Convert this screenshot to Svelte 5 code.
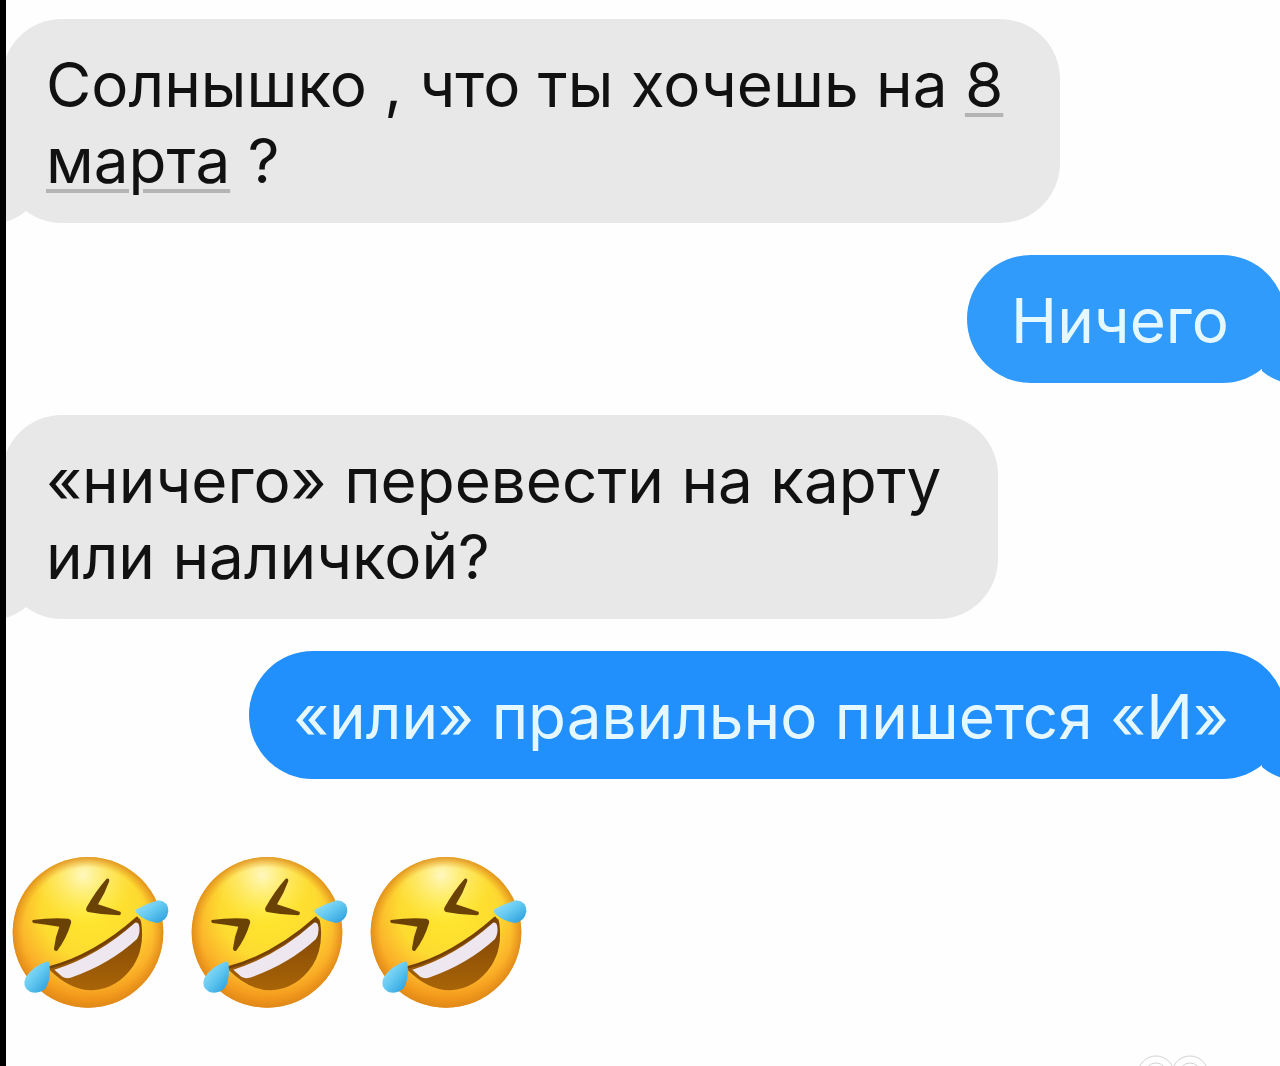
<script lang="ts">
  type Part = { text: string; marked?: boolean };
  type Message = { side: 'in' | 'out'; tone: string; lines: Part[][] };

  const messages: Message[] = [
    {
      side: 'in',
      tone: 'grey',
      lines: [
        [{ text: 'Солнышко , что ты хочешь на ' }, { text: '8', marked: true }],
        [{ text: 'марта', marked: true }, { text: ' ?' }],
      ],
    },
    { side: 'out', tone: 'sky', lines: [[{ text: 'Ничего' }]] },
    {
      side: 'in',
      tone: 'grey',
      lines: [[{ text: '«ничего» перевести на карту' }], [{ text: 'или наличкой?' }]],
    },
    { side: 'out', tone: 'blue', lines: [[{ text: '«или» правильно пишется «И»' }]] },
  ];
</script>

<main class="chat">
  {#each messages as message}
    <div class="bubble {message.side} {message.tone}">
      {#each message.lines as line}
        <span class="line">{#each line as part}<span class:marked={part.marked}>{part.text}</span>{/each}</span>
      {/each}
      <svg class="tail" viewBox="0 0 24 44" aria-hidden="true">
        <path d="M0 0H24V32Q15 40 0 44Z" fill="currentColor" />
      </svg>
    </div>
  {/each}

  <div class="reactions">
    {#each [1, 2, 3] as n}
      <svg class="emoji" viewBox="36 42 474 474" role="img" aria-label="🤣">
        <defs>
          <radialGradient id="face{n}" gradientUnits="userSpaceOnUse" cx="270" cy="210" r="292">
            <stop offset="0" stop-color="#ffe82c" />
            <stop offset="0.5" stop-color="#fddb31" />
            <stop offset="0.76" stop-color="#fbb32a" />
            <stop offset="1" stop-color="#ee8612" />
          </radialGradient>
          <radialGradient id="shine{n}" gradientUnits="userSpaceOnUse" cx="250" cy="105" r="150">
            <stop offset="0" stop-color="#fffbd0" stop-opacity="0.9" />
            <stop offset="1" stop-color="#fff27a" stop-opacity="0" />
          </radialGradient>
          <radialGradient id="rim{n}" gradientUnits="userSpaceOnUse" cx="264" cy="277" r="226">
            <stop offset="0.86" stop-color="#e79a1c" stop-opacity="0" />
            <stop offset="1" stop-color="#dd8a1b" stop-opacity="0.85" />
          </radialGradient>
          <linearGradient id="mouth{n}" x1="0" y1="0" x2="0" y2="1">
            <stop offset="0" stop-color="#7a4304" />
            <stop offset="1" stop-color="#a96407" />
          </linearGradient>
          <linearGradient id="tear{n}" x1="0" y1="0" x2="1" y2="1">
            <stop offset="0" stop-color="#a5e6f8" />
            <stop offset="0.5" stop-color="#62c8f0" />
            <stop offset="1" stop-color="#2398da" />
          </linearGradient>
        </defs>
        <circle cx="264" cy="277" r="226" fill="url(#face{n})" />
        <circle cx="264" cy="277" r="226" fill="url(#shine{n})" />
        <circle cx="264" cy="277" r="226" fill="url(#rim{n})" />
        <path
          d="M320 116Q329 114 328 123Q315 160 294 193Q327 204 361 215Q366 222 357 226Q310 225 264 216Q255 212 260 202Q286 154 320 116Z"
          fill="#6b4205"
        />
        <path
          d="M98 240Q150 233 205 236Q216 239 213 250Q199 297 171 333Q162 335 162 325Q166 290 178 260Q140 254 100 249Q94 245 98 240Z"
          fill="#6b4205"
        />
        <path
          d="M150 381Q285 345 410 234Q422 232 424 250Q434 325 400 377Q354 445 278 451Q213 453 150 391Z"
          fill="url(#mouth{n})"
        />
        <path
          d="M163 389Q293 348 405 248Q416 246 418 260Q421 280 411 297Q327 374 212 413Q198 417 187 410Z"
          fill="#efe7ef"
        />
        <path
          d="M150 382Q285 346 411 234"
          fill="none"
          stroke="#744006"
          stroke-width="8"
          stroke-linecap="round"
        />
        <path
          d="M407 209Q440 190 475 181Q505 184 505 214Q501 244 471 249Q429 242 407 216Z"
          fill="url(#tear{n})"
        />
        <path
          d="M139 365Q148 362 149 375Q153 421 137 445Q119 463 91 456Q65 443 76 414Q98 378 139 365Z"
          fill="url(#tear{n})"
        />
      </svg>
    {/each}
  </div>

  <svg class="mark" viewBox="0 0 80 12" aria-hidden="true">
    <g fill="#fff" stroke="#d2d2d2" stroke-width="1">
      <circle cx="26" cy="20" r="18" />
      <circle cx="60" cy="20" r="18" />
      <circle cx="26" cy="20" r="11" />
      <circle cx="60" cy="20" r="11" />
    </g>
  </svg>
</main>

<style>
  :global(body) {
    margin: 0;
    background: #fefefe;
  }

  .chat {
    display: flex;
    flex-direction: column;
    gap: 32px;
    min-height: 100vh;
    padding-top: 19px;
    border-left: 6px solid #000;
    box-sizing: border-box;
    overflow: hidden;
    font-family: Inter, 'Liberation Sans', sans-serif;
    font-size: 62px;
    line-height: 76px;
  }

  .bubble {
    position: relative;
    padding: 28px 57px 24px 44px;
    border-radius: 60px;
  }

  .in {
    align-self: flex-start;
    margin-left: -4px;
  }

  .out {
    align-self: flex-end;
    margin-right: -6px;
    border-radius: 64px;
  }

  .grey {
    background: #e8e8e9;
  }

  .sky {
    background: #309bfb;
  }

  .blue {
    background: #218ffc;
  }

  .line {
    display: block;
    white-space: pre;
  }

  .grey .line {
    color: #111;
  }

  .out .line {
    color: #e6f8ff;
  }

  .marked {
    text-decoration: underline;
    text-decoration-color: #b4b4b5;
    text-decoration-thickness: 4px;
    text-underline-offset: 6px;
  }

  .tail {
    position: absolute;
    bottom: 0;
    left: 0;
    width: 24px;
    height: 44px;
    color: #e8e8e9;
  }

  .out .tail {
    right: 0;
    left: auto;
    transform: scaleX(-1);
  }

  .sky .tail {
    color: #309bfb;
  }

  .blue .tail {
    color: #218ffc;
  }

  .reactions {
    display: flex;
    gap: 21px;
    margin-top: 43px;
    padding-left: 6px;
  }

  .emoji {
    width: 158px;
    height: 158px;
  }

  .mark {
    align-self: flex-end;
    width: 80px;
    height: 12px;
    margin-top: auto;
    margin-right: 70px;
  }
</style>
